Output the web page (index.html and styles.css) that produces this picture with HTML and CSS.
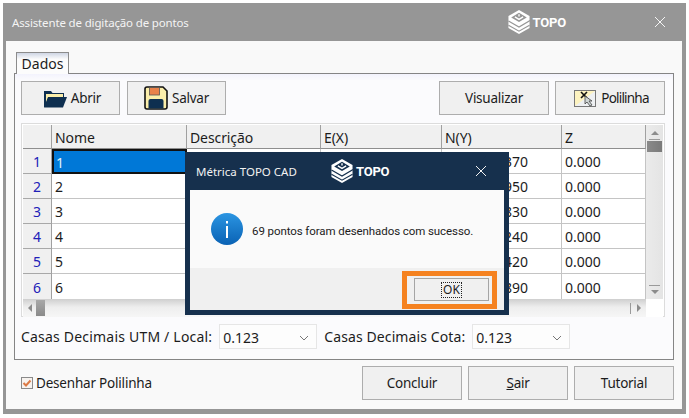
FILE: index.html
```html
<!DOCTYPE html>
<html lang="pt-BR">
<head>
  <meta charset="UTF-8">
  <title>Assistente de digitação de pontos</title>
  <link rel="stylesheet" href="styles.css">
</head>
<body>
  <div class="window">
    <div class="titlebar">
      <span class="title">Assistente de digitação de pontos</span>
      <span class="logo logo-main">
        <svg class="logo-mark" viewBox="0 0 24 26"><path d="M12 0 23.500 6.500V19.500L12 26 .5 19.500V6.500Z" fill="currentColor"/><path d="M12 3 20.500 8 12 13 3.500 8Z" fill="#969696"/><path d="M7.500 7.500 12 10.200 16.500 7.500M12 4.500V7" fill="none" stroke="currentColor" stroke-width="1.500"/><path d="M.5 12 12 18.500 24 11.500M.5 16.500 12 23 23.500 16.500" fill="none" stroke="#969696" stroke-width="1.300"/></svg>
        <span class="logo-text">TOPO</span>
      </span>
      <svg class="close close-main" viewBox="0 0 10 10"><path d="M0 0 10 10M10 0 0 10" stroke="currentColor" stroke-width="1"/></svg>
    </div>

    <div class="content">
      <div class="tabs"><span class="tab">Dados</span></div>

      <div class="panel">
        <div class="toolbar">
          <button class="btn btn-open">
            <svg class="icon-folder" viewBox="0 0 24 19"><path d="M1 18V2h7l1.500 2H21v4H6L3 18Z" fill="#0e2f50"/><path d="M3 5h17v4H5L3 14Z" fill="#fbeeaa"/><path d="M5 8h19l-4 10.500H1Z" fill="#0e2f50"/></svg>
            Abrir
          </button>
          <button class="btn btn-save">
            <svg class="icon-save" viewBox="0 0 24 24"><path d="M3 1h16l4 4v16a2 2 0 0 1-2 2H3a2 2 0 0 1-2-2V3a2 2 0 0 1 2-2Z" fill="#fbeeaa" stroke="#111" stroke-width="1.600"/><rect x="5.500" y="1.500" width="10" height="7.500" fill="#e9824a" stroke="#555" stroke-width=".8"/><path d="M4.500 22.500V15a2 2 0 0 1 2-2h11a2 2 0 0 1 2 2v7.500Z" fill="#0e2f50"/></svg>
            Salvar
          </button>
          <button class="btn btn-view">Visualizar</button>
          <button class="btn btn-poly">
            <svg class="icon-poly" viewBox="0 0 22 17"><rect x=".5" y=".5" width="21" height="16" fill="#fdf3c0" stroke="#777"/><path d="M1 16 21 1v15Z" fill="#eef0f2"/><path d="M7 2l6 6M13 2 7 8" stroke="#111" stroke-width="1.600"/><path d="M11 6l0 8 2-2 3 4 2-1-3-4h3Z" fill="#cfd6d6" stroke="#444" stroke-width=".8"/></svg>
            Polilinha
          </button>
        </div>

        <div class="grid-box">
          <div class="grid-main">
            <table class="grid">
              <colgroup>
                <col class="col-num"><col class="col-name"><col class="col-desc"><col class="col-e"><col class="col-n"><col class="col-z">
              </colgroup>
              <thead>
                <tr><th></th><th>Nome</th><th>Descrição</th><th>E(X)</th><th>N(Y)</th><th>Z</th></tr>
              </thead>
              <tbody>
                <tr><td class="num">1</td><td class="selected">1</td><td></td><td></td><td class="cut">370</td><td>0.000</td></tr>
                <tr><td class="num">2</td><td>2</td><td></td><td></td><td class="cut">950</td><td>0.000</td></tr>
                <tr><td class="num">3</td><td>3</td><td></td><td></td><td class="cut">830</td><td>0.000</td></tr>
                <tr><td class="num">4</td><td>4</td><td></td><td></td><td class="cut">240</td><td>0.000</td></tr>
                <tr><td class="num">5</td><td>5</td><td></td><td></td><td class="cut">420</td><td>0.000</td></tr>
                <tr><td class="num">6</td><td>6</td><td></td><td></td><td class="cut">890</td><td>0.000</td></tr>
              </tbody>
            </table>
            <div class="vscroll">
              <span class="arrow arrow-up"></span>
              <span class="vdash"></span>
              <span class="vthumb"></span>
              <span class="vspace"></span>
              <span class="vdash"></span>
              <span class="arrow arrow-down"></span>
            </div>
          </div>
          <div class="hscroll">
            <span class="arrow arrow-left"></span>
            <span class="hthumb"></span>
            <span class="hspace"></span>
            <span class="hdash"></span>
            <span class="arrow arrow-right"></span>
            <span class="corner"></span>
          </div>
        </div>

        <div class="decimals">
          <span class="dec-utm">Casas Decimais UTM / Local:</span>
          <div class="combo">0.123
            <svg class="chevron" viewBox="0 0 10 6"><path d="M1 1l4 4 4-4" fill="none" stroke="#777"/></svg>
          </div>
          <span class="dec-cota">Casas Decimais Cota:</span>
          <div class="combo">0.123
            <svg class="chevron" viewBox="0 0 10 6"><path d="M1 1l4 4 4-4" fill="none" stroke="#777"/></svg>
          </div>
        </div>
      </div>

      <div class="footer">
        <label class="check">
          <svg class="checkbox" viewBox="0 0 12 12"><rect x=".5" y=".5" width="11" height="11" fill="#f7f3ef" stroke="#8a8a8a"/><path d="M2.500 6 5 8.500 9.500 3.500" fill="none" stroke="#dc7a45" stroke-width="2"/></svg>
          Desenhar Polilinha
        </label>
        <div class="footer-btns">
          <button class="btn btn-wide">Concluir</button>
          <button class="btn btn-wide"><u>S</u>air</button>
          <button class="btn btn-wide">Tutorial</button>
        </div>
      </div>
    </div>

    <!-- message box over the form -->
    <div class="modal">
      <div class="titlebar modal-bar">
        <span class="modal-title">Métrica TOPO CAD</span>
        <span class="logo logo-modal">
          <svg class="logo-mark" viewBox="0 0 24 26"><path d="M12 0 23.500 6.500V19.500L12 26 .5 19.500V6.500Z" fill="currentColor"/><path d="M12 3 20.500 8 12 13 3.500 8Z" fill="#16304d"/><path d="M7.500 7.500 12 10.200 16.500 7.500M12 4.500V7" fill="none" stroke="currentColor" stroke-width="1.500"/><path d="M.5 12 12 18.500 24 11.500M.5 16.500 12 23 23.500 16.500" fill="none" stroke="#16304d" stroke-width="1.300"/></svg>
          <span class="logo-text">TOPO</span>
        </span>
        <svg class="close close-modal" viewBox="0 0 10 10"><path d="M0 0 10 10M10 0 0 10" stroke="currentColor" stroke-width="1"/></svg>
      </div>
      <div class="modal-body">
        <svg class="icon-info" viewBox="0 0 32 32">
          <defs><linearGradient id="infoFill" x1="0" y1="0" x2="0" y2="1"><stop offset="0" stop-color="#2b95e2"/><stop offset="1" stop-color="#0a62b4"/></linearGradient></defs>
          <circle cx="16" cy="16" r="16" fill="url(#infoFill)"/>
          <rect x="15" y="8" width="2" height="2.500" fill="#fff"/>
          <rect x="15" y="13" width="2" height="12" fill="#fff"/>
        </svg>
        <span class="modal-text">69 pontos foram desenhados com sucesso.</span>
      </div>
      <div class="modal-footer">
        <div class="highlight">
          <button class="btn-ok"><span class="ok-focus">OK</span></button>
        </div>
      </div>
    </div>
  </div>
</body>
</html>
```

FILE: styles.css
```css
:root {
  --frame: #969696;
  --navy: #16304d;
  --face: #f0f0f0;
  --line: #c4c4c4;
  --text: #1c1c1c;
}

* {
  box-sizing: border-box;
}

body {
  margin: 0;
  background: #fff;
  font-family: "Noto Sans", sans-serif;
  font-size: 14px;
  color: var(--text);
}

.window {
  position: relative;
  display: flex;
  flex-direction: column;
  width: 683px;
  height: 411px;
  margin: 3px 0 0 3px;
  padding: 0 4px 5px 3px;
  background: var(--frame);
}

.titlebar {
  display: flex;
  align-items: center;
  flex: none;
  height: 38px;
  color: #f4f4f4;
}

.title {
  flex: 1;
  margin-left: 6px;
  font-size: 11.5px;
  letter-spacing: -.15px;
}

.logo {
  display: flex;
  align-items: center;
  gap: 3px;
  color: #fff;
}

.logo-main {
  margin-right: 89px;
}

.logo-mark {
  width: 22px;
  height: 24px;
}

.logo-text {
  font-family: "Roboto", sans-serif;
  font-size: 13px;
  font-weight: 700;
  letter-spacing: -.2px;
}

.close {
  width: 10px;
  height: 10px;
}

.close-main {
  margin-right: 17px;
}

.content {
  display: flex;
  flex-direction: column;
  flex: 1;
  padding: 11px 8px 0;
  background: #f9f9f9;
}

.tabs {
  display: flex;
  height: 21px;
  padding-left: 2px;
}

.tab {
  position: relative;
  z-index: 1;
  width: 53px;
  height: 22px;
  border: 1px solid #8c8c8c;
  border-bottom: none;
  background: linear-gradient(#cfd6e4, #fcfcfc 30%);
  text-align: center;
  line-height: 21px;
}

.panel {
  height: 287px;
  padding: 7px 8px 0 6px;
  border: 1px solid #858585;
  background: linear-gradient(#f3f3fd, #fbfbfd 6px);
}

.toolbar {
  display: flex;
  gap: 7px;
  margin-bottom: 8px;
}

.btn {
  display: flex;
  align-items: center;
  justify-content: center;
  height: 34px;
  padding: 0;
  border: 1px solid #adadad;
  background: var(--face);
  font: inherit;
  font-size: 13.5px;
  letter-spacing: -.25px;
  color: var(--text);
}

.btn-open,
.btn-save {
  width: 99px;
}

.btn-open {
  padding-left: 3px;
}

.btn-view {
  width: 110px;
  margin-left: auto;
}

.btn-poly {
  width: 110px;
  margin-left: -1px;
  padding-left: 3px;
  letter-spacing: -.8px;
}

.icon-folder {
  width: 24px;
  height: 19px;
  margin-right: 4px;
}

.icon-save {
  width: 24px;
  height: 24px;
  margin-right: 4px;
}

.icon-poly {
  width: 22px;
  height: 17px;
  margin-right: 5px;
}

.grid-box {
  width: 644px;
  height: 194px;
  padding: 1px;
  border: 1px solid #dcdcdc;
  background: #fff;
}

.grid-main {
  display: flex;
}

.grid {
  width: 623px;
  border-collapse: separate;
  border-spacing: 0;
  table-layout: fixed;
}

.col-num { width: 29px; }
.col-name { width: 135px; }
.col-desc { width: 134px; }
.col-e { width: 121px; }
.col-n { width: 120px; }
.col-z { width: 84px; }

.grid th,
.grid td {
  padding: 1px 0 0 3px;
  border-right: 1px solid var(--line);
  border-bottom: 1px solid var(--line);
  text-align: left;
  font-weight: 400;
  white-space: nowrap;
  overflow: hidden;
}

.grid th {
  height: 24px;
  padding-top: 2px;
  letter-spacing: -.1px;
  border-right-color: #a0a0a0;
  border-bottom-color: #8e8e8e;
  background: var(--face);
}

.grid td {
  height: 25px;
}

.grid tr:last-child td {
  border-bottom: none;
}

.grid .num {
  padding: 1px 0 0;
  background: var(--face);
  color: #2020b8;
  text-align: center;
  border-right-color: #a0a0a0;
  border-bottom-color: #a8a8a8;
}

.grid .selected {
  padding-left: 2px;
  border: 2px solid #111;
  background: #0078d7;
  color: #e6f2fb;
}

/* only the end of the value shows past the message box */
.grid .cut {
  padding-left: 62px;
}

.vscroll {
  display: flex;
  flex-direction: column;
  align-items: center;
  width: 17px;
  height: 174px;
  padding-top: 6px;
  background: linear-gradient(90deg, #ebebeb, #e4e4e4);
}

.vdash {
  width: 11px;
  height: 1px;
  margin: 4px 0 1px;
  background: #9a9a9a;
}

.vthumb {
  width: 15px;
  height: 11px;
  background: linear-gradient(90deg, #8a8a8a, #7a7a7a);
}

.vspace {
  flex: 1;
}

.arrow {
  width: 0;
  height: 0;
  flex: none;
  border: 4px solid transparent;
}

.arrow-up {
  border-top: none;
  border-bottom: 4px solid #8c8c8c;
}

.arrow-down {
  margin: 3px 0 5px;
  border-bottom: none;
  border-top: 4px solid #8c8c8c;
}

.hscroll {
  display: flex;
  align-items: center;
  height: 18px;
  background: linear-gradient(#cfcfcf, #eee 45%, #f6f6f6);
}

.arrow-left {
  margin-left: 5px;
  border-left: none;
  border-right: 4px solid #8c8c8c;
}

.arrow-right {
  margin-left: 6px;
  border-right: none;
  border-left: 4px solid #8c8c8c;
}

.hthumb {
  width: 9px;
  height: 16px;
  margin-left: 4px;
  background: linear-gradient(#a8a8a8, #8a8a8a);
}

.hspace {
  flex: 1;
}

.hdash {
  width: 1px;
  height: 11px;
  background: #9a9a9a;
}

.corner {
  width: 17px;
  height: 18px;
  margin-left: 5px;
  background: #fff;
}

.decimals {
  display: flex;
  align-items: center;
  margin-top: 7px;
}

.dec-utm {
  letter-spacing: .2px;
}

.dec-cota {
  letter-spacing: .1px;
}

.combo {
  display: flex;
  align-items: center;
  justify-content: space-between;
  width: 98px;
  height: 25px;
  margin: 0 7px;
  padding: 2px 7px 0 3px;
  border: 1px solid #e6e6e6;
  background: #fdfdfd;
}

.chevron {
  width: 10px;
  height: 6px;
}

.footer {
  display: flex;
  align-items: flex-start;
  justify-content: space-between;
  padding-top: 6px;
}

.check {
  display: flex;
  align-items: center;
  gap: 3px;
  margin: 8px 0 0 7px;
  font-size: 13.5px;
  letter-spacing: -.2px;
}

.checkbox {
  width: 12px;
  height: 12px;
}

.footer-btns {
  display: flex;
  gap: 6px;
}

.btn-wide {
  width: 100px;
}

.modal {
  position: absolute;
  top: 149px;
  left: 182px;
  display: flex;
  flex-direction: column;
  width: 324px;
  height: 163px;
  padding: 0 5px 5px;
  background: var(--navy);
}

.modal-bar {
  color: #f2f2f2;
}

.modal-title {
  width: 135px;
  margin-left: 6px;
  font-size: 11.5px;
}

.logo-modal {
  flex: 1;
}

.close-modal {
  margin-right: 18px;
}

.modal-body {
  display: flex;
  align-items: center;
  flex: none;
  height: 78px;
  padding-left: 21px;
  background: #fafafa;
}

.icon-info {
  width: 32px;
  height: 32px;
  margin-right: 9px;
  flex: none;
}

.modal-text {
  padding-top: 3px;
  font-family: "Roboto", sans-serif;
  font-size: 11.5px;
  letter-spacing: -.08px;
  white-space: nowrap;
}

.modal-footer {
  display: flex;
  justify-content: flex-end;
  flex: 1;
  padding: 3px 7px 0 0;
  background: var(--face);
}

.highlight {
  width: 95px;
  height: 38px;
  padding: 2px 3px 3px 7px;
  border: 5px solid #f58220;
}

.btn-ok {
  display: flex;
  align-items: center;
  justify-content: center;
  width: 75px;
  height: 23px;
  padding: 0;
  border: 1px solid #a5a5a5;
  background: var(--face);
  font: inherit;
  font-size: 12px;
  color: var(--text);
}

.ok-focus {
  padding: 0 1px;
  line-height: 14px;
  border: 1px dotted #222;
}
```
